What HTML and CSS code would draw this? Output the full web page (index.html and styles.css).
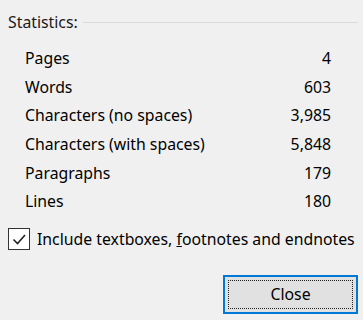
FILE: index.html
```html
<!DOCTYPE html>
<html>
<head>
<meta charset="utf-8">
<link rel="stylesheet" href="styles.css">
</head>
<body>
<div class="dialog">
  <div class="group-header">
    <span class="group-title">Statistics:</span>
    <span class="group-line"></span>
  </div>
  <div class="stats">
    <div class="row"><span>Pages</span><span>4</span></div>
    <div class="row"><span>Words</span><span>603</span></div>
    <div class="row"><span>Characters (no spaces)</span><span>3,985</span></div>
    <div class="row"><span>Characters (with spaces)</span><span>5,848</span></div>
    <div class="row"><span>Paragraphs</span><span>179</span></div>
    <div class="row"><span>Lines</span><span>180</span></div>
  </div>
  <label class="check">
    <span class="box">
      <svg width="20" height="20" viewBox="0 0 20 20"><path d="M4.5 10.5 L8.5 14.5 L16 6" fill="none" stroke="#222" stroke-width="1.6"/></svg>
    </span>
    <span class="check-label">Include textboxes, <u>f</u>ootnotes and endnotes</span>
  </label>
  <div class="actions">
    <button class="btn"><span class="focus">Close</span></button>
  </div>
</div>
</body>
</html>
```
FILE: styles.css
```css
html, body {
  margin: 0;
  padding: 0;
  background: #f0f0f0;
}
body {
  font-family: "Noto Sans", "Open Sans", sans-serif;
  font-size: 15.8px;
  color: #000;
  width: 363px;
  height: 320px;
  overflow: hidden;
}
.dialog {
  padding: 12px 5px 0 8px;
}
.group-header {
  display: flex;
  align-items: center;
  height: 20px;
}
.group-title {
  white-space: nowrap;
  color: #1a1a1a;
}
.group-line {
  flex: 1;
  height: 1px;
  background: #dadada;
  margin-left: 5px;
}
.stats {
  margin: 12px 27px 0 17px;
}
.row {
  display: flex;
  justify-content: space-between;
  align-items: center;
  height: 28.6px;
}
.check {
  display: flex;
  align-items: center;
  margin-top: 12px;
  height: 22px;
}
.box {
  width: 20px;
  height: 20px;
  border: 1px solid #333;
  background: #fff;
  display: flex;
  flex: none;
}
.check-label {
  margin-left: 7px;
  white-space: nowrap;
}
.actions {
  display: flex;
  justify-content: flex-end;
  margin-top: 25px;
}
.btn {
  width: 135px;
  height: 39px;
  border: 2px solid #0078d7;
  background: #e1e1e1;
  padding: 3px;
  margin: 0;
  font: inherit;
  color: #000;
  display: flex;
  box-sizing: border-box;
}
.focus {
  flex: 1;
  border: 1px dotted #222;
  display: flex;
  align-items: center;
  justify-content: center;
}
```
